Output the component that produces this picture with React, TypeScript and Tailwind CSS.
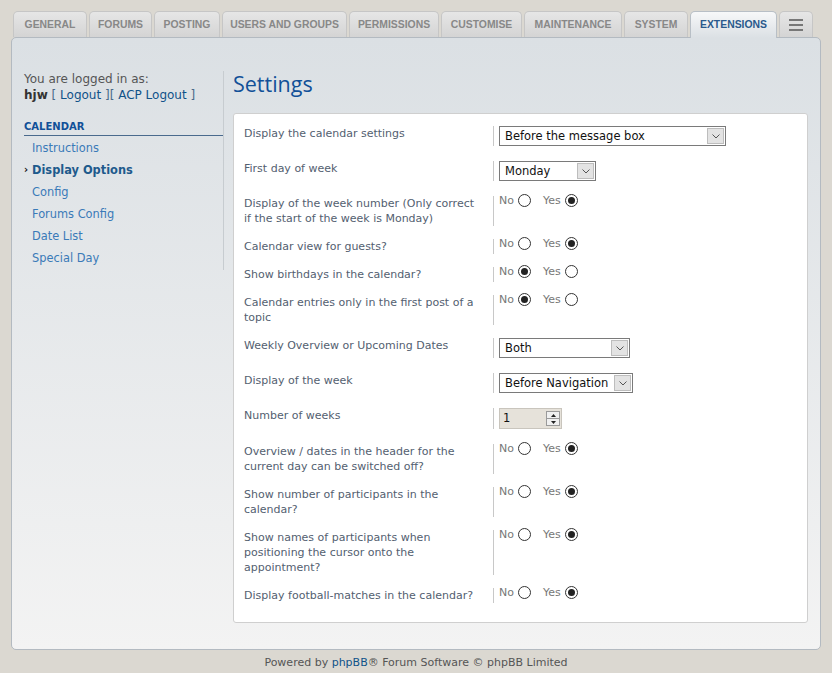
import React from "react";

const tabs = [
  { label: "GENERAL", w: "w-[74px]" },
  { label: "FORUMS", w: "w-[63px]" },
  { label: "POSTING", w: "w-[66px]" },
  { label: "USERS AND GROUPS", w: "w-[125px]" },
  { label: "PERMISSIONS", w: "w-[90px]" },
  { label: "CUSTOMISE", w: "w-[81px]" },
  { label: "MAINTENANCE", w: "w-[98px]" },
  { label: "SYSTEM", w: "w-[64px]" },
];

const menu = ["Instructions", "Display Options", "Config", "Forums Config", "Date List", "Special Day"];

type Row =
  | { label: string[]; kind: "radio"; yes: boolean }
  | { label: string[]; kind: "select"; value: string; w: string }
  | { label: string[]; kind: "number"; value: string };

const rows: Row[] = [
  { label: ["Display the calendar settings"], kind: "select", value: "Before the message box", w: "w-[227px]" },
  { label: ["First day of week"], kind: "select", value: "Monday", w: "w-[97px]" },
  { label: ["Display of the week number (Only correct", "if the start of the week is Monday)"], kind: "radio", yes: true },
  { label: ["Calendar view for guests?"], kind: "radio", yes: true },
  { label: ["Show birthdays in the calendar?"], kind: "radio", yes: false },
  { label: ["Calendar entries only in the first post of a", "topic"], kind: "radio", yes: false },
  { label: ["Weekly Overview or Upcoming Dates"], kind: "select", value: "Both", w: "w-[131px]" },
  { label: ["Display of the week"], kind: "select", value: "Before Navigation", w: "w-[134px]" },
  { label: ["Number of weeks"], kind: "number", value: "1" },
  { label: ["Overview / dates in the header for the", "current day can be switched off?"], kind: "radio", yes: true },
  { label: ["Show number of participants in the", "calendar?"], kind: "radio", yes: true },
  { label: ["Show names of participants when", "positioning the cursor onto the", "appointment?"], kind: "radio", yes: true },
  { label: ["Display football-matches in the calendar?"], kind: "radio", yes: true },
];

function Radio({ on }: { on: boolean }) {
  return (
    <span className="inline-flex w-[13px] h-[13px] rounded-full border border-[#333] bg-white items-center justify-center ml-[4px]">
      {on && <span className="w-[7px] h-[7px] rounded-full bg-[#222]" />}
    </span>
  );
}

function Chevron() {
  return (
    <svg width="8" height="5" viewBox="0 0 8 5">
      <path d="M0.5 0.5 L4 4 L7.5 0.5" fill="none" stroke="#555" strokeWidth="1" />
    </svg>
  );
}

function Select({ value, w }: { value: string; w: string }) {
  return (
    <div className={`${w} h-[20px] border border-[#7a7a7a] bg-white flex items-stretch`}>
      <span className="flex-1 pl-[5px] text-[11.5px] leading-[18px] text-[#111] whitespace-nowrap overflow-hidden">{value}</span>
      <span className="w-[17px] m-[1px] bg-[#e3e3e3] border border-[#bdbdbd] flex items-center justify-center">
        <Chevron />
      </span>
    </div>
  );
}

function NumberInput({ value }: { value: string }) {
  return (
    <div className="w-[63px] h-[21px] border border-[#c9c5bd] bg-[#e6e2da] flex items-stretch">
      <span className="flex-1 pl-[3px] text-[11.5px] leading-[19px] text-[#111]">{value}</span>
      <span className="w-[14px] my-[2px] mr-[1px] border border-[#9a9a9a] bg-[#f0f0f0] flex flex-col">
        <span className="flex-1 flex items-center justify-center border-b border-[#9a9a9a]">
          <svg width="5" height="3" viewBox="0 0 5 3"><path d="M0 3 L2.5 0 L5 3Z" fill="#222" /></svg>
        </span>
        <span className="flex-1 flex items-center justify-center">
          <svg width="5" height="3" viewBox="0 0 5 3"><path d="M0 0 L2.5 3 L5 0Z" fill="#222" /></svg>
        </span>
      </span>
    </div>
  );
}

export default function App() {
  return (
    <div className="w-[832px] h-[673px] bg-[#dbd8d1] pt-[11px] font-['DejaVu_Sans',Verdana,sans-serif]">
      {/* tabs */}
      <div className="flex items-end gap-[2px] pl-[13px] h-[26px]">
        {tabs.map((t) => (
          <div
            key={t.label}
            className={`${t.w} h-[26px] rounded-t-[5px] border border-b-0 border-[#c6c6c6] bg-gradient-to-b from-[#e6e6e6] to-[#d4d4d4] flex items-center justify-center font-['Liberation_Sans',Arial,sans-serif] font-bold text-[10.4px] text-[#888] whitespace-nowrap`}
          >
            {t.label}
          </div>
        ))}
        <div className="relative z-10 w-[87px] h-[27px] -mb-[1px] rounded-t-[5px] border border-b-0 border-[#b8bfc6] bg-gradient-to-b from-[#f7f8f9] to-[#dbe0e4] flex items-center justify-center font-['Liberation_Sans',Arial,sans-serif] font-bold text-[10.4px] text-[#2a5a8c]">
          EXTENSIONS
        </div>
        <div className="w-[34px] h-[26px] rounded-t-[5px] border border-b-0 border-[#c6c6c6] bg-gradient-to-b from-[#e6e6e6] to-[#d4d4d4] flex flex-col items-center justify-center gap-[3px]">
          <span className="w-[14px] h-[2px] bg-[#777]" />
          <span className="w-[14px] h-[2px] bg-[#777]" />
          <span className="w-[14px] h-[2px] bg-[#777]" />
        </div>
      </div>

      {/* panel */}
      <div className="mx-[11px] h-[613px] rounded-[5px] border border-[#b3bac1] bg-gradient-to-b from-[#dbe0e4] to-[#f3f3f3] flex pl-[12px] pr-[12px]">
        {/* sidebar */}
        <div className="w-[200px] pt-[33px]">
          <div className="border-r border-[#c7ccd0] pb-[1px]">
            <div className="text-[12px] leading-[16px] text-[#555]">You are logged in as:</div>
            <div className="text-[12px] leading-[16px] text-[#4a6a8a]">
              <b className="text-[#333]">hjw</b> [ <span className="text-[#105289]">Logout</span> ][ <span className="text-[#105289]">ACP Logout</span> ]
            </div>
            <div className="mt-[17px] pb-[1px] border-b border-[#4a6a8d] text-[10px] font-bold text-[#115098] leading-[14px]">CALENDAR</div>
            <ul className="pt-[1px]">
              {menu.map((m) => (
                <li key={m} className="relative h-[22px] pl-[8px] text-[11.4px] leading-[22px]">
                  {m === "Display Options" ? (
                    <>
                      <span className="absolute left-[0px] top-0 text-[10px] font-bold text-[#111]">›</span>
                      <span className="font-bold text-[#1e5a8c]">{m}</span>
                    </>
                  ) : (
                    <span className="text-[#3a7ab8]">{m}</span>
                  )}
                </li>
              ))}
            </ul>
          </div>
        </div>

        {/* main */}
        <div className="flex-1 pl-[9px]">
          <h1 className="mt-[31px] h-[44px] text-[21.5px] leading-[30px] text-[#115098] font-['Open_Sans','DejaVu_Sans',sans-serif]">Settings</h1>
          <div className="h-[510px] bg-white border border-[#cfcfcf] rounded-[3px] pt-[6px] px-[10px]">
            {rows.map((r, i) => (
              <div
                key={i}
                className={`flex items-stretch pt-[6px] ${r.kind === "radio" ? "pb-[7px]" : "pb-[9px]"}`}
              >
                <div className="w-[250px] shrink-0 border-r border-[#c8c8c8] text-[11px] leading-[15px] text-[#536070]">
                  {r.label.map((l, j) => (
                    <div key={j} className="whitespace-nowrap">{l}</div>
                  ))}
                </div>
                <div className="pl-[5px]">
                  {r.kind === "radio" && (
                    <div className="flex items-center -mt-[3px] text-[11px] leading-[15px] text-[#777]">
                      <span>No</span>
                      <Radio on={!r.yes} />
                      <span className="ml-[12px]">Yes</span>
                      <Radio on={r.yes} />
                    </div>
                  )}
                  {r.kind === "select" && <Select value={r.value} w={r.w} />}
                  {r.kind === "number" && <NumberInput value={r.value} />}
                </div>
              </div>
            ))}
          </div>
        </div>
      </div>

      {/* footer */}
      <div className="text-center text-[11px] leading-[24px] text-[#555] pt-[1px]">
        Powered by <span className="text-[#105289]">phpBB</span>® Forum Software © phpBB Limited
      </div>
    </div>
  );
}
